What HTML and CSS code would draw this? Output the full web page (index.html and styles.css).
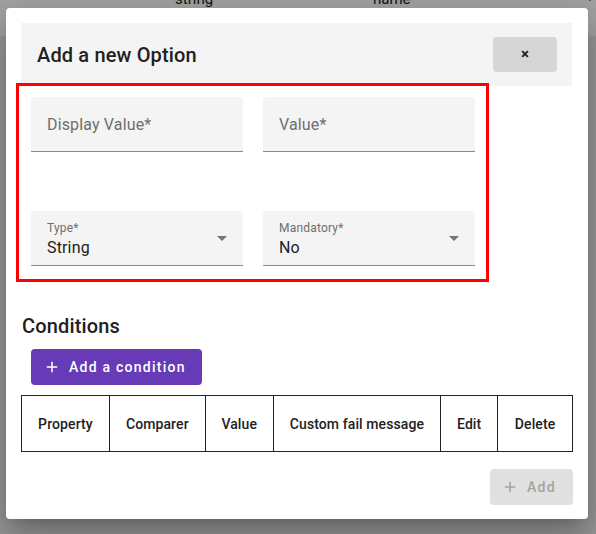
FILE: index.html
```html
<!DOCTYPE html>
<html>
<head>
<meta charset="utf-8">
<link rel="stylesheet" href="styles.css">
</head>
<body>
<div class="page">
  <div class="page-row">
    <span class="bg-cell bg-string">string</span>
    <span class="bg-cell bg-name">name</span>
    <svg class="bg-chevron" viewBox="0 0 24 24" width="18" height="18"><path d="M7.41 8.59 12 13.170l4.59-4.58L18 10l-6 6-6-6z" fill="#222"/></svg>
  </div>
  <div class="page-rest"></div>
</div>
<div class="backdrop"></div>

<div class="dialog">
  <div class="dialog-header">
    <h2 class="dialog-title">Add a new Option</h2>
    <button class="close-btn">×</button>
  </div>

  <form class="option-form">
    <div class="field">
      <span class="field-placeholder">Display Value*</span>
    </div>
    <div class="field">
      <span class="field-placeholder">Value*</span>
    </div>
    <div class="field select">
      <div class="select-content">
        <span class="field-label">Type*</span>
        <span class="field-value">String</span>
      </div>
      <span class="select-arrow"></span>
    </div>
    <div class="field select">
      <div class="select-content">
        <span class="field-label">Mandatory*</span>
        <span class="field-value">No</span>
      </div>
      <span class="select-arrow"></span>
    </div>
  </form>

  <h3 class="section-title">Conditions</h3>
  <button class="btn btn-primary">
    <svg class="btn-icon" viewBox="0 0 24 24" width="18" height="18"><path d="M19 13h-6v6h-2v-6H5v-2h6V5h2v6h6v2z" fill="currentColor"/></svg>
    <span>Add a condition</span>
  </button>

  <table class="cond-table">
    <thead>
      <tr>
        <th class="c-prop">Property</th>
        <th class="c-comp">Comparer</th>
        <th class="c-val">Value</th>
        <th class="c-msg">Custom fail message</th>
        <th class="c-edit">Edit</th>
        <th class="c-del">Delete</th>
      </tr>
    </thead>
  </table>

  <div class="dialog-actions">
    <button class="btn btn-disabled" disabled>
      <svg class="btn-icon" viewBox="0 0 24 24" width="18" height="18"><path d="M19 13h-6v6h-2v-6H5v-2h6V5h2v6h6v2z" fill="currentColor"/></svg>
      <span>Add</span>
    </button>
  </div>
</div>
</body>
</html>
```

FILE: styles.css
```css
* { box-sizing: border-box; }

html, body {
  margin: 0;
  padding: 0;
  width: 596px;
  height: 534px;
  overflow: hidden;
  font-family: Roboto, "Noto Sans", Arial, sans-serif;
}

.page {
  width: 596px;
  height: 534px;
  display: flex;
  flex-direction: column;
  background: #ffffff;
}

.page-row {
  height: 36px;
  background: #ffffff;
  position: relative;
  flex: none;
}

.bg-cell {
  position: absolute;
  top: -10px;
  font-size: 15px;
  color: #222;
}
.bg-string { left: 175px; }
.bg-name { left: 373px; }
.bg-chevron {
  position: absolute;
  right: -3px;
  top: -11px;
}

.page-rest {
  flex: 1;
  background: #f0f0f0;
}

.backdrop {
  position: absolute;
  inset: 0;
  background: rgba(0, 0, 0, 0.36);
}

.dialog {
  position: absolute;
  left: 6px;
  top: 8px;
  width: 582px;
  height: 511px;
  background: #ffffff;
  border-radius: 4px;
  padding: 15px 16px 15px 15px;
  display: flex;
  flex-direction: column;
  box-shadow: 0 11px 15px -7px rgba(0,0,0,.2), 0 24px 38px 3px rgba(0,0,0,.14), 0 9px 46px 8px rgba(0,0,0,.12);
}

.dialog-header {
  height: 63px;
  background: #f4f4f4;
  display: flex;
  align-items: center;
  justify-content: space-between;
  padding: 0 15px 0 16px;
  flex: none;
}

.dialog-title {
  margin: 0;
  font-size: 20px;
  font-weight: 500;
  color: #212121;
  letter-spacing: 0.15px;
}

.close-btn {
  width: 64px;
  height: 35px;
  border: none;
  border-radius: 4px;
  background: #d6d6d6;
  font-family: Roboto, Arial, sans-serif;
  font-size: 15px;
  font-weight: 700;
  color: #222;
  padding: 0;
  margin-top: -1px;
}

.option-form {
  margin: -3px 0 0 -5px;
  width: 473px;
  border: 3px solid #ff0000;
  padding: 11px 11px 13px 12px;
  display: grid;
  grid-template-columns: 212px 212px;
  column-gap: 20px;
  row-gap: 59px;
  flex: none;
}

.field {
  height: 55px;
  background: #f4f4f4;
  border-radius: 4px 4px 0 0;
  border-bottom: 1px solid #8a8a8a;
  padding: 18px 16px 0 16px;
}

.field-placeholder {
  display: block;
  font-size: 16px;
  line-height: 20px;
  color: #6e6e6e;
  letter-spacing: 0.15px;
}

.field.select {
  padding: 0 16px;
  display: flex;
  align-items: center;
  justify-content: space-between;
}

.select-content {
  display: flex;
  flex-direction: column;
  padding-top: 1px;
}

.field-label {
  font-size: 12px;
  line-height: 16px;
  color: #6e6e6e;
  letter-spacing: 0.2px;
}

.field-value {
  font-size: 16px;
  line-height: 20px;
  margin-top: 2px;
  color: #212121;
  letter-spacing: 0.15px;
}

.select-arrow {
  width: 0;
  height: 0;
  border-left: 5px solid transparent;
  border-right: 5px solid transparent;
  border-top: 5px solid #757575;
  margin-top: 1px;
}

.section-title {
  margin: 32px 0 0 1px;
  font-size: 20px;
  line-height: 24px;
  font-weight: 500;
  color: #212121;
  letter-spacing: 0.15px;
}

.btn {
  display: inline-flex;
  align-items: center;
  height: 36px;
  border: none;
  border-radius: 4px;
  font-family: Roboto, Arial, sans-serif;
  font-size: 14px;
  font-weight: 500;
  letter-spacing: 1.25px;
  gap: 8px;
  flex: none;
}

.btn-primary {
  align-self: flex-start;
  margin: 11px 0 0 10px;
  background: #673ab7;
  color: #ffffff;
  padding: 0 16px 0 12px;
  width: 171px;
}

.btn-icon { flex: none; }

.cond-table {
  margin-top: 10px;
  width: 552px;
  border-collapse: collapse;
  flex: none;
}

.cond-table th {
  height: 56px;
  border: 1px solid #222;
  font-size: 14px;
  font-weight: 500;
  color: #212121;
  text-align: center;
  padding: 0;
  letter-spacing: 0.1px;
}

.c-prop { width: 88px; }
.c-comp { width: 96px; }
.c-val { width: 68px; }
.c-msg { width: 168px; }
.c-edit { width: 57px; }
.c-del { width: 75px; }

.dialog-actions {
  margin-top: 17px;
  display: flex;
  justify-content: flex-end;
}

.btn-disabled {
  background: #e0e0e0;
  color: #a3a3a3;
  padding: 0 17px 0 11px;
  width: 83px;
  margin-right: -1px;
}
```
